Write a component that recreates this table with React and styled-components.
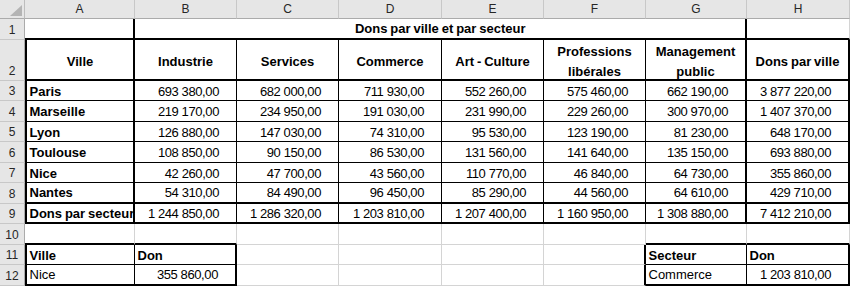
import React from 'react';
import styled, { createGlobalStyle, css } from 'styled-components';

const GlobalStyle = createGlobalStyle`
  html, body { margin: 0; padding: 0; background: #fff; }
  body { font-family: "Liberation Sans", Arial, sans-serif; }
`;

const Sheet = styled.div`
  display: grid;
  grid-template-columns: 25px 110px 102px 102px 103px 102px 102px 101px 103px;
  grid-template-rows: 19px 20.5px 41px repeat(10, 20.5px);
  width: 850px;
  font-family: "Liberation Sans", Arial, sans-serif;
  color: #000;
`;

const headBase = css`
  box-sizing: border-box;
  background: #e6e6e6;
  color: #262626;
  font-size: 12px;
`;

const Corner = styled.div`
  ${headBase};
  border-right: 1px solid #bdbdbd;
  border-bottom: 1px solid #ababab;
  svg { display: block; }
`;

const ColHead = styled.div`
  ${headBase};
  display: flex;
  align-items: center;
  justify-content: center;
  border-right: 1px solid #c8c8c8;
  border-bottom: 1px solid #ababab;
  line-height: 18px;
`;

const RowHead = styled.div`
  ${headBase};
  display: flex;
  align-items: flex-end;
  justify-content: center;
  border-right: 1px solid #ababab;
  border-bottom: 1px solid #c8c8c8;
  line-height: 16px;
  padding-bottom: 1px;
`;

const BORDER = {
  g: '1px solid #d4d4d4',
  t: '1px solid #000',
  T: '2px solid #000',
};

const JUSTIFY = { left: 'flex-start', right: 'flex-end', center: 'center' };

const Cell = styled.div`
  box-sizing: border-box;
  min-width: 0;
  display: flex;
  align-items: ${(p) => (p.$v === 'center' ? 'center' : 'flex-end')};
  justify-content: ${(p) => JUSTIFY[p.$align || 'left']};
  text-align: ${(p) => p.$align || 'left'};
  grid-column: ${(p) => (p.$span ? `span ${p.$span}` : 'auto')};
  border-right: ${(p) => BORDER[p.$r || 'g']};
  border-bottom: ${(p) => BORDER[p.$b || 'g']};
  border-left: ${(p) => (p.$l ? BORDER[p.$l] : 'none')};
  font-size: 13px;
  font-weight: ${(p) => (p.$bold ? 700 : 400)};
  letter-spacing: ${(p) => (p.$num ? '-0.4px' : 'normal')};
  word-spacing: ${(p) => (p.$num ? '0' : '-0.7px')};
  white-space: ${(p) => (p.$v === 'center' ? 'normal' : 'nowrap')};
  line-height: ${(p) => (p.$v === 'center' ? '20px' : '16px')};
  padding: ${(p) =>
    p.$v === 'center'
      ? '6px 2px 0 2px'
      : p.$align === 'right'
      ? '0 17px 0.5px 2px'
      : '0 2px 0.5px 2.5px'};
  overflow: visible;
`;

const LETTERS = ['A', 'B', 'C', 'D', 'E', 'F', 'G', 'H'];
const RIGHTS = ['T', 't', 't', 't', 't', 't', 'T', 'T'];

const HEADERS = [
  'Ville',
  'Industrie',
  'Services',
  'Commerce',
  'Art - Culture',
  'Professions libérales',
  'Management public',
  'Dons par ville',
];

const DATA = [
  ['Paris', '693 380,00', '682 000,00', '711 930,00', '552 260,00', '575 460,00', '662 190,00', '3 877 220,00'],
  ['Marseille', '219 170,00', '234 950,00', '191 030,00', '231 990,00', '229 260,00', '300 970,00', '1 407 370,00'],
  ['Lyon', '126 880,00', '147 030,00', '74 310,00', '95 530,00', '123 190,00', '81 230,00', '648 170,00'],
  ['Toulouse', '108 850,00', '90 150,00', '86 530,00', '131 560,00', '141 640,00', '135 150,00', '693 880,00'],
  ['Nice', '42 260,00', '47 700,00', '43 560,00', '110 770,00', '46 840,00', '64 730,00', '355 860,00'],
  ['Nantes', '54 310,00', '84 490,00', '96 450,00', '85 290,00', '44 560,00', '64 610,00', '429 710,00'],
  ['Dons par secteur', '1 244 850,00', '1 286 320,00', '1 203 810,00', '1 207 400,00', '1 160 950,00', '1 308 880,00', '7 412 210,00'],
];

function lookupRows() {
  const last = (b) => [
    { l: 'T', r: 't', b, bold: b === 't', text: b === 't' ? 'Ville' : 'Nice' },
    b === 't'
      ? { r: 'T', b, bold: true, text: 'Don' }
      : { r: 'T', b, align: 'right', num: true, text: '355 860,00' },
    {},
    {},
    {},
    { r: 'T' },
    { r: 't', b, bold: b === 't', text: b === 't' ? 'Secteur' : 'Commerce' },
    b === 't'
      ? { r: 'T', b, bold: true, text: 'Don' }
      : { r: 'T', b, align: 'right', num: true, text: '1 203 810,00' },
  ];
  return [last('t'), last('T')];
}

export default function App() {
  const rows = [];

  rows.push([
    { r: 'T', b: 'T' },
    { r: 'T', b: 'T', span: 6, bold: true, align: 'center', text: 'Dons par ville et par secteur' },
    { b: 'T' },
  ]);

  rows.push(
    HEADERS.map((h, i) => ({
      l: i === 0 ? 'T' : undefined,
      r: RIGHTS[i],
      b: 'T',
      bold: true,
      align: 'center',
      v: 'center',
      text: h,
    }))
  );

  DATA.forEach((row, ri) => {
    const b = ri >= 5 ? 'T' : 't';
    rows.push(
      row.map((val, i) =>
        i === 0
          ? { l: 'T', r: RIGHTS[i], b, bold: true, text: val }
          : { r: RIGHTS[i], b, align: 'right', num: true, text: val }
      )
    );
  });

  rows.push(['T', 'T', 'g', 'g', 'g', 'g', 'T', 'T'].map((b) => ({ b })));

  lookupRows().forEach((r) => rows.push(r));

  return (
    <>
      <GlobalStyle />
      <Sheet>
        <Corner>
          <svg width="24" height="18" viewBox="0 0 24 18">
            <polygon points="10,16 22,16 22,5" fill="#b4b4b4" />
          </svg>
        </Corner>
        {LETTERS.map((l) => (
          <ColHead key={l}>{l}</ColHead>
        ))}
        {rows.map((cells, ri) => (
          <React.Fragment key={ri}>
            <RowHead>{ri + 1}</RowHead>
            {cells.map((c, ci) => (
              <Cell
                key={ci}
                $l={c.l}
                $r={c.r}
                $b={c.b}
                $bold={c.bold}
                $align={c.align}
                $num={c.num}
                $v={c.v}
                $span={c.span}
              >
                {c.text}
              </Cell>
            ))}
          </React.Fragment>
        ))}
      </Sheet>
    </>
  );
}
